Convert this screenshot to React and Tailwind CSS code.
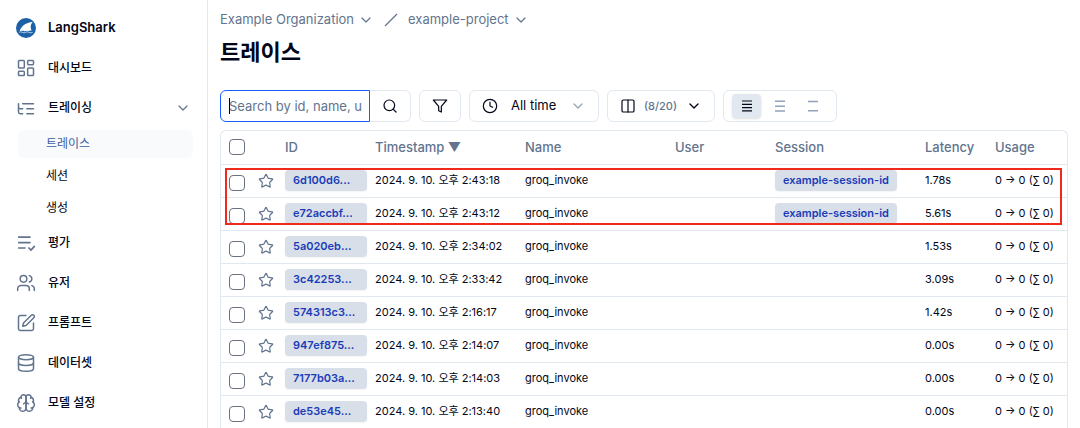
import React from "react";
import { ChevronDown, Search, Clock, Columns2, Star, LayoutDashboard, Database } from "lucide-react";

function Icon({ children, className = "size-5", strokeWidth = 1.8 }) {
  return (
    <svg
      viewBox="0 0 24 24"
      className={`shrink-0 ${className}`}
      fill="none"
      stroke="currentColor"
      strokeWidth={strokeWidth}
      strokeLinecap="round"
      strokeLinejoin="round"
      aria-hidden="true"
    >
      {children}
    </svg>
  );
}

const ListTreeIcon = () => (
  <Icon>
    <path d="M21 12h-8M21 6H8M21 18h-8M3 6v4c0 1.1.9 2 2 2h3M3 10v6c0 1.1.9 2 2 2h3" transform="translate(0 .8)" />
  </Icon>
);

const EvalIcon = () => (
  <Icon strokeWidth={2}>
    <g strokeLinecap="butt">
      <path d="M2.500 5h15M2.500 11.500h15M2.500 18h9" />
    </g>
    <path d="M15.500 18l2.500 2.500 4-4.500" />
  </Icon>
);

const UsersIcon = () => (
  <Icon>
    <path d="M16 21v-2a4 4 0 0 0-4-4H6a4 4 0 0 0-4 4v2" />
    <circle cx="9" cy="7" r="4" />
    <path d="M22 21v-2a4 4 0 0 0-3-3.870M16 3.130a4 4 0 0 1 0 7.750" />
  </Icon>
);

const PenIcon = () => (
  <Icon>
    <path d="M12 3H5a2 2 0 0 0-2 2v14a2 2 0 0 0 2 2h14a2 2 0 0 0 2-2v-7" />
    <path d="M18.375 2.625a2.121 2.121 0 1 1 3 3L12 15l-4 1 1-4Z" />
  </Icon>
);

const BrainIcon = () => (
  <Icon>
    <path d="M12 5a3 3 0 1 0-5.997.125 4 4 0 0 0-2.526 5.770 4 4 0 0 0 .556 6.588A4 4 0 1 0 12 18Z" />
    <path d="M12 5a3 3 0 1 1 5.997.125 4 4 0 0 1 2.526 5.770 4 4 0 0 1-.556 6.588A4 4 0 1 1 12 18Z" />
    <path d="M15 13a4.500 4.500 0 0 1-3-4 4.500 4.500 0 0 1-3 4" />
    <path d="M17.599 6.500a3 3 0 0 0 .399-1.375M6.003 5.125A3 3 0 0 0 6.401 6.500M3.477 10.896a4 4 0 0 1 .585-.396M19.938 10.500a4 4 0 0 1 .585.396M6 18a4 4 0 0 1-1.967-.516M19.967 17.484A4 4 0 0 1 18 18" />
  </Icon>
);

function SharkLogo() {
  return (
    <svg viewBox="0 0 60 60" className="size-5 shrink-0" aria-hidden="true">
      <circle cx="30" cy="30" r="30" fill="#1c60a8" />
      <path
        d="M11 38C17 24 29 14 50 12C43 20 42 28 47 38C42 36 39 40 35 39C31 37 28 41 24 39C20 37 16 40 11 38Z"
        fill="#fff"
      />
      <path d="M9 43q5-3 10 0t10 0t10 0t11 0" fill="none" stroke="#fff" strokeWidth="2" />
    </svg>
  );
}

const lucideProps = { className: "size-5 shrink-0", strokeWidth: 1.8, "aria-hidden": true };

function NavItem({ icon, label, expandable }) {
  return (
    <li>
      <a href="#" className="flex h-10 items-center gap-3 pr-4 pl-4 text-xs font-medium">
        <span className="text-slate-500">{icon}</span>
        <span className="flex-1">{label}</span>
        {expandable && <ChevronDown className="size-4 text-slate-500" strokeWidth={1.8} />}
      </a>
    </li>
  );
}

function SubItem({ label, active }) {
  return (
    <li>
      <a
        href="#"
        className={`flex h-7 items-center rounded-md pl-7 text-xs ${active ? "bg-slate-50 text-[#3c5fa0]" : ""}`}
      >
        {label}
      </a>
    </li>
  );
}

function Sidebar() {
  return (
    <aside className="w-52 shrink-0 border-r border-slate-200 pt-2">
      <nav>
        <a href="#" className="flex h-10 items-center gap-3 pl-4 text-[13px] font-semibold">
          <SharkLogo />
          LangShark
        </a>
        <ul>
          <NavItem icon={<LayoutDashboard {...lucideProps} />} label="대시보드" />
          <NavItem icon={<ListTreeIcon />} label="트레이싱" expandable />
          <li>
            <ul className="flex flex-col gap-1 pt-[2px] pr-[14px] pb-px pl-[18px]">
              <SubItem label="트레이스" active />
              <SubItem label="세션" />
              <SubItem label="생성" />
            </ul>
          </li>
          <NavItem icon={<EvalIcon />} label="평가" />
          <NavItem icon={<UsersIcon />} label="유저" />
          <NavItem icon={<PenIcon />} label="프롬프트" />
          <NavItem icon={<Database {...lucideProps} />} label="데이터셋" />
          <NavItem icon={<BrainIcon />} label="모델 설정" />
        </ul>
      </nav>
    </aside>
  );
}

function Breadcrumb() {
  return (
    <nav className="flex h-5 items-center text-[13px] text-slate-500">
      <button type="button" className="flex items-center gap-1">
        Example Organization <ChevronDown className="size-4" strokeWidth={1.8} />
      </button>
      <svg viewBox="0 0 14 14" className="mx-[10px] size-[14px]" aria-hidden="true">
        <path d="M1 13L13 1" stroke="currentColor" strokeWidth="1.300" />
      </svg>
      <button type="button" className="flex items-center gap-1">
        example-project <ChevronDown className="size-4" strokeWidth={1.8} />
      </button>
    </nav>
  );
}

function DensityButton({ label, active, children }) {
  return (
    <button
      type="button"
      aria-label={label}
      aria-pressed={Boolean(active)}
      className={`flex h-6 w-[29px] items-center justify-center rounded ${active ? "bg-slate-200 shadow-sm" : "text-slate-400"}`}
    >
      {children}
    </button>
  );
}

function Toolbar() {
  return (
    <div className="flex h-8 gap-2">
      <form className="flex">
        <div className="relative flex">
          <input
            type="text"
            aria-label="Search traces"
            placeholder="Search by id, name, u"
            className="w-[150px] rounded-l-md border border-blue-600 pt-px pr-1 pl-2 text-[13px] caret-transparent outline-none placeholder:text-slate-500"
          />
          <span className="absolute top-2 left-[9px] h-4 w-px bg-black" />
        </div>
        <button type="submit" aria-label="Search" className="flex w-[41px] items-center justify-center rounded-r-md border border-l-0 border-slate-200">
          <Search className="size-4" strokeWidth={1.8} />
        </button>
      </form>
      <button type="button" aria-label="Filter" className="flex w-[42px] items-center justify-center rounded-md border border-slate-200">
        <Icon className="size-4">
          <path d="M22 3H2l8 9.460V19l4 2v-8.540L22 3z" />
        </Icon>
      </button>
      <label className="grid w-[130px] items-center rounded-md border border-slate-200">
        <Clock className="col-start-1 row-start-1 ml-3 size-4" strokeWidth={1.8} />
        <select aria-label="Time range" className="col-start-1 row-start-1 h-full appearance-none bg-transparent pl-[41px] text-[13px] outline-none">
          <option>All time</option>
        </select>
        <ChevronDown className="pointer-events-none col-start-1 row-start-1 mr-3 size-4 justify-self-end text-slate-400" strokeWidth={1.8} />
      </label>
      <button type="button" className="flex w-[108px] items-center rounded-md border border-slate-200 px-3">
        <Columns2 className="size-4" strokeWidth={1.8} />
        <span className="ml-2 flex-1 text-left text-[11px] font-medium text-slate-500">(8/20)</span>
        <ChevronDown className="size-4" strokeWidth={2} />
      </button>
      <div role="group" aria-label="Row height" className="flex items-center gap-1 rounded-md border border-slate-200 pr-[9px] pl-2">
        <DensityButton label="Small" active>
          <svg viewBox="0 0 12 12" className="size-3" stroke="currentColor" strokeWidth="1.200">
            <path d="M1 1h10M1 4.300h10M1 7.600h10M1 10.900h10" />
          </svg>
        </DensityButton>
        <DensityButton label="Medium">
          <svg viewBox="0 0 12 12" className="size-3" stroke="currentColor" strokeWidth="1.500">
            <path d="M1 1.300h10M1 6.200h10M1 11h10" />
          </svg>
        </DensityButton>
        <DensityButton label="Large">
          <svg viewBox="0 0 12 12" className="size-3" stroke="currentColor" strokeWidth="1.500">
            <path d="M1 1.500h10M1 10.800h10" />
          </svg>
        </DensityButton>
      </div>
    </div>
  );
}

const rows = [
  { id: "6d100d6...", time: "2:43:18", session: "example-session-id", latency: "1.78s" },
  { id: "e72accbf...", time: "2:43:12", session: "example-session-id", latency: "5.61s" },
  { id: "5a020eb...", time: "2:34:02", latency: "1.53s" },
  { id: "3c42253...", time: "2:33:42", latency: "3.09s" },
  { id: "574313c3...", time: "2:16:17", latency: "1.42s" },
  { id: "947ef875...", time: "2:14:07", latency: "0.00s" },
  { id: "7177b03a...", time: "2:14:03", latency: "0.00s" },
  { id: "de53e45...", time: "2:13:40", latency: "0.00s" },
];

function Checkbox({ label }) {
  return (
    <input
      type="checkbox"
      aria-label={label}
      className="block size-4 appearance-none rounded border border-gray-500 bg-white"
    />
  );
}

function Badge({ children, className = "" }) {
  return (
    <a href="#" className={`flex h-[21px] items-center rounded bg-[#d9dfe9] px-2 text-[11px] font-semibold text-blue-800 shadow-xs ${className}`}>
      {children}
    </a>
  );
}

function TraceTable() {
  return (
    <div className="relative rounded-t-md border border-b-0 border-slate-200">
      <table className="w-full table-fixed text-left">
        <colgroup>
          <col className="w-[29px]" />
          <col className="w-[27px]" />
          <col className="w-[90px]" />
          <col className="w-[150px]" />
          <col className="w-[150px]" />
          <col className="w-[100px]" />
          <col className="w-[150px]" />
          <col className="w-[70px]" />
          <col />
        </colgroup>
        <thead className="text-[13px] text-slate-500">
          <tr className="h-[33px] border-b border-slate-200 [&>th]:pl-2 [&>th]:font-medium">
            <th><Checkbox label="Select all" /></th>
            <th aria-label="Bookmark" />
            <th>ID</th>
            <th>Timestamp ▼</th>
            <th>Name</th>
            <th>User</th>
            <th>Session</th>
            <th>Latency</th>
            <th>Usage</th>
          </tr>
        </thead>
        <tbody className="text-[11px] whitespace-nowrap">
          {rows.map((row) => (
            <tr key={row.id} className="h-[33px] border-b border-slate-200 [&>td]:pb-px [&>td]:pl-2">
              <td className="pt-[5px]"><Checkbox label={`Select ${row.id}`} /></td>
              <td className="pt-[2px]">
                <button type="button" aria-label="Bookmark trace" className="flex">
                  <Star className="size-4 shrink-0 text-slate-500" strokeWidth={1.8} />
                </button>
              </td>
              <td><Badge>{row.id}</Badge></td>
              <td>2024. 9. 10. 오후 {row.time}</td>
              <td>groq_invoke</td>
              <td />
              <td>{row.session && <Badge className="w-fit">{row.session}</Badge>}</td>
              <td>{row.latency}</td>
              <td>0 → 0 (∑ 0)</td>
            </tr>
          ))}
        </tbody>
      </table>
      <div className="pointer-events-none absolute top-[37px] right-[5px] left-1 h-[57px] border-2 border-[#f0291d]" />
    </div>
  );
}

export default function App() {
  return (
    <div className="flex h-screen overflow-hidden bg-white font-['Inter','Noto_Sans_CJK_KR',sans-serif] text-slate-950">
      <Sidebar />
      <main className="min-w-0 flex-1 pt-[10px] pr-3 pl-3">
        <Breadcrumb />
        <h1 className="mt-[6px] mb-[22px] h-8 text-[22px] leading-8 font-bold">트레이스</h1>
        <Toolbar />
        <div className="mt-2">
          <TraceTable />
        </div>
      </main>
    </div>
  );
}
